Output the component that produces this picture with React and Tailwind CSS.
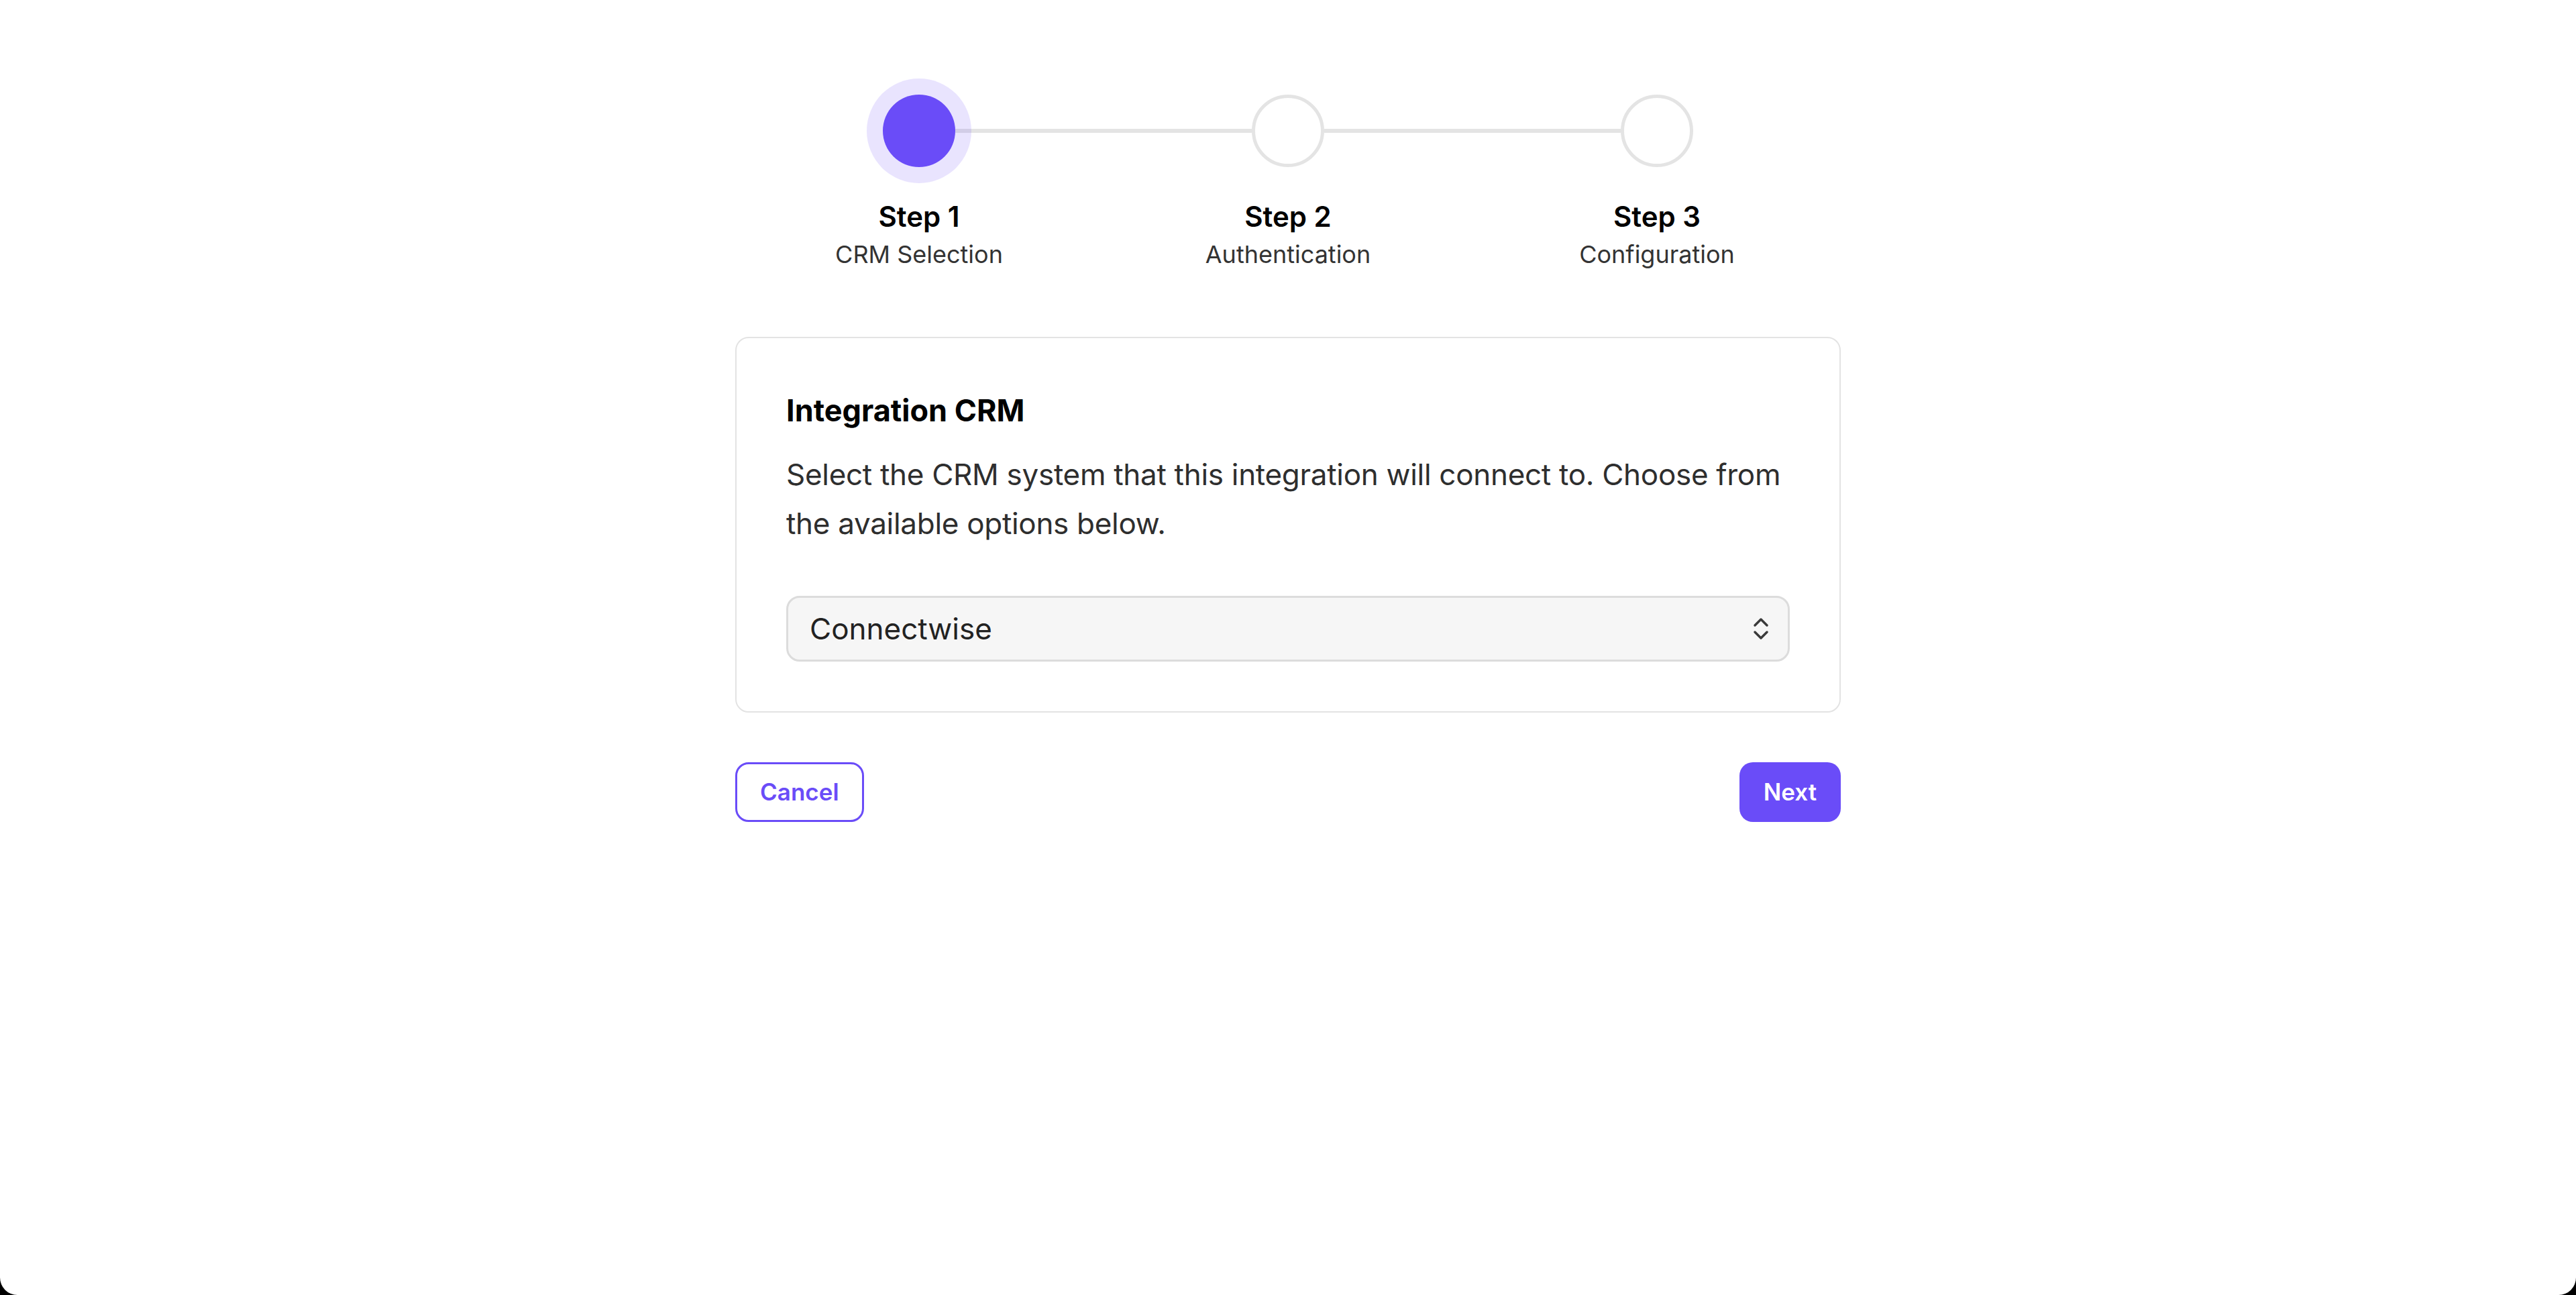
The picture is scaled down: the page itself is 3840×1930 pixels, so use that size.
const steps = [
    { title: "Step 1", label: "CRM Selection" },
    { title: "Step 2", label: "Authentication" },
    { title: "Step 3", label: "Configuration" },
]

function Stepper({ current }) {
    return (
        <div className="flex flex-col items-center">
            <div className="flex items-center w-[1208px] pt-[141px]">
                {steps.map((s, i) => (
                    <div key={s.title} className={i === steps.length - 1 ? "flex items-center" : "flex items-center flex-1"}>
                        {i === current ?
                            <div className="relative z-10 w-[108px] h-[108px] rounded-full bg-[#6a4cf8] shadow-[0_0_0_24px_rgba(106,76,248,0.15)] shrink-0" />
                            :
                            <div className="w-[108px] h-[108px] rounded-full bg-white border-[5px] border-[#e4e4e4] shrink-0" />}
                        {i < steps.length - 1 ? <div className="flex-1 h-[6px] bg-[#e4e4e4]" /> : null}
                    </div>
                ))}
            </div>
            <div className="grid grid-cols-3 w-[1650px] mt-[49px]">
                {steps.map((s) => (
                    <div key={s.title} className="flex flex-col items-center">
                        <h2 className="text-[42px] leading-[50px] font-semibold text-black">{s.title}</h2>
                        <p className="text-[36px] leading-[46px] text-[#333333] mt-[8px]">{s.label}</p>
                    </div>
                ))}
            </div>
        </div>
    )
}

function UpDownIcon() {
    return (
        <svg width="24" height="34" viewBox="0 0 24 34" fill="none" stroke="#3a3a3a" strokeWidth="3.5" strokeLinecap="round" strokeLinejoin="round">
            <path d="M3 12 L12 3 L21 12" />
            <path d="M3 22 L12 31 L21 22" />
        </svg>
    )
}

export default function App() {
    return (
        <div className="w-full h-[1930px] bg-black" style={{ fontFamily: "Inter, 'Noto Sans', sans-serif" }}>
            <div className="w-full h-full bg-white rounded-b-[26px] overflow-hidden">
                <Stepper current={0} />
                <div className="w-[1648px] mx-auto mt-[100px]">
                    <div className="border-[2px] border-[#e3e3e3] rounded-[20px] px-[74px] pt-[81px] pb-[74px]">
                        <h1 className="text-[45px] leading-[54px] font-bold text-black">Integration CRM</h1>
                        <p className="text-[44px] leading-[73px] text-[#2e2e2e] mt-[32px] tracking-[-0.3px]">
                            Select the CRM system that this integration will connect to. Choose from the available options below.
                        </p>
                        <div className="mt-[71px] h-[98px] flex items-center justify-between bg-[#f6f6f6] border-[3px] border-[#dcdcdc] rounded-[20px] pl-[32px] pr-[28px]">
                            <span className="text-[44px] text-[#222222]">Connectwise</span>
                            <UpDownIcon />
                        </div>
                    </div>
                    <div className="flex justify-between items-center mt-[74px]">
                        <button className="h-[89px] px-[34px] border-[3px] border-[#6a4cf8] rounded-[20px] text-[#6a4cf8] text-[35px] font-semibold bg-white">
                            Cancel
                        </button>
                        <button className="h-[89px] px-[36px] rounded-[20px] bg-[#6a4cf8] text-white text-[35px] font-semibold">
                            Next
                        </button>
                    </div>
                </div>
            </div>
        </div>
    )
}
